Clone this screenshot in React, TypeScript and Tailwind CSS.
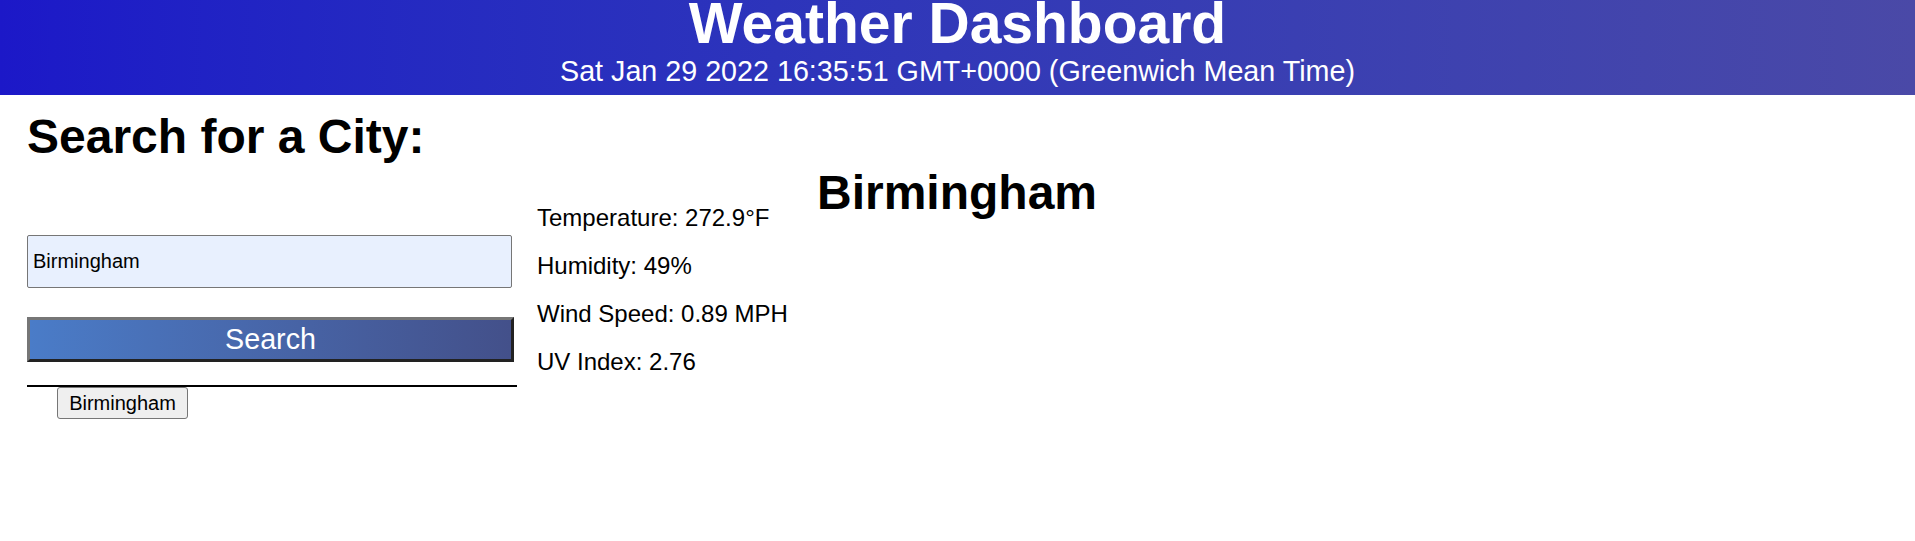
import React from "react";

const stats = [
  "Temperature: 272.9°F",
  "Humidity: 49%",
  "Wind Speed: 0.89 MPH",
  "UV Index: 2.76",
];

const App = () => {
  return (
    <div className="min-h-[541px] bg-white text-black font-['Liberation_Sans',Arial,sans-serif]">
      <header className="h-[95px] bg-linear-to-r from-[#1c18c8] to-[#4a49a7] text-center text-white">
        <h1 className="text-[57px] font-bold leading-[46px]">Weather Dashboard</h1>
        <p className="mt-[6px] text-[28.7px] leading-[38px]">
          Sat Jan 29 2022 16:35:51 GMT+0000 (Greenwich Mean Time)
        </p>
      </header>

      <main className="flex items-start">
        <section className="ml-[27px] flex w-[490px] flex-col pt-[18px]">
          <h2 className="text-[48px] font-bold leading-[48px]">Search for a City:</h2>
          <input
            className="mt-[74px] h-[53px] w-[485px] rounded-[2px] border border-[#767676] bg-[#e8f0fe] px-[5px] text-[20px] outline-none"
            value="Birmingham"
            readOnly
          />
          <button className="mt-[29px] h-[45px] w-[487px] border-[3px] border-t-[#767676] border-l-[#767676] border-b-[#222] border-r-[#222] bg-linear-to-r from-[#4a7cc8] to-[#43508a] text-[28.7px] leading-none text-white">
            Search
          </button>
          <div className="mt-[23px] h-[2px] w-[490px] bg-black" />
          <div className="pl-[30px]">
            <button className="h-[32px] w-[131px] rounded-[3px] border border-[#767676] bg-[#efefef] text-[20px] leading-none">
              Birmingham
            </button>
          </div>
        </section>

        <section className="ml-5 flex w-[260px] flex-col gap-5 pt-[109px] text-[24px] leading-[28px]">
          {stats.map((s) => (
            <p key={s}>{s}</p>
          ))}
        </section>

        <div className="w-[320px] pt-[74px] text-center">
          <h2 className="text-[48px] font-bold leading-[48px]">Birmingham</h2>
        </div>
      </main>
    </div>
  );
};

export default App;
